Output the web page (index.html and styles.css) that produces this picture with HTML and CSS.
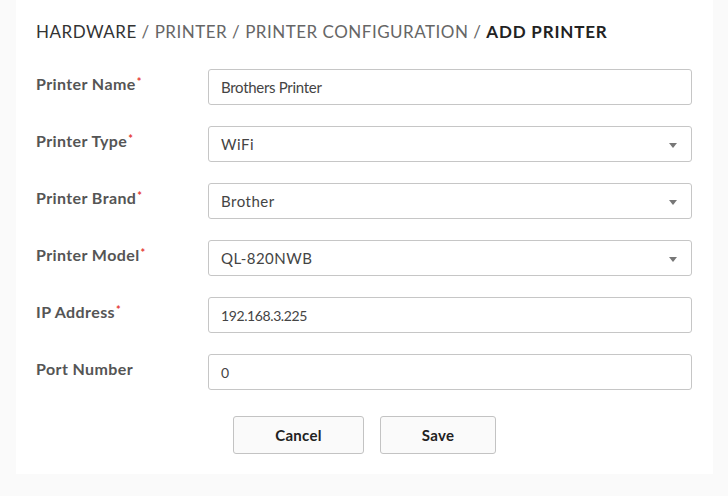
FILE: index.html
```html
<!DOCTYPE html>
<html>
<head>
<meta charset="utf-8">
<link rel="stylesheet" href="styles.css">
</head>
<body>
<div class="page">
  <div class="card">
    <div class="crumbs"><span class="crumb-root">HARDWARE</span><span class="crumb-mid"> / PRINTER / PRINTER CONFIGURATION / </span><span class="crumb-cur">ADD PRINTER</span></div>
    <form class="form">
      <div class="row">
        <label class="label">Printer Name<span class="req">*</span></label>
        <div class="field"><span class="value text">Brothers Printer</span></div>
      </div>
      <div class="row">
        <label class="label">Printer Type<span class="req">*</span></label>
        <div class="field select"><span class="value">WiFi</span><span class="caret"></span></div>
      </div>
      <div class="row">
        <label class="label">Printer Brand<span class="req">*</span></label>
        <div class="field select"><span class="value">Brother</span><span class="caret"></span></div>
      </div>
      <div class="row">
        <label class="label">Printer Model<span class="req">*</span></label>
        <div class="field select"><span class="value">QL-820NWB</span><span class="caret"></span></div>
      </div>
      <div class="row">
        <label class="label">IP Address<span class="req">*</span></label>
        <div class="field"><span class="value light">192.168.3.225</span></div>
      </div>
      <div class="row">
        <label class="label">Port Number</label>
        <div class="field"><span class="value light">0</span></div>
      </div>
      <div class="actions">
        <button type="button" class="btn btn-cancel">Cancel</button>
        <button type="button" class="btn btn-save">Save</button>
      </div>
    </form>
  </div>
</div>
</body>
</html>
```
FILE: styles.css
```css
html, body {
  margin: 0;
  padding: 0;
  background: #fafafa;
  font-family: "Lato", "Open Sans", sans-serif;
}
.page {
  width: 728px;
  height: 496px;
  padding: 0 15px 0 16px;
  box-sizing: border-box;
}
.card {
  background: #ffffff;
  height: 474px;
  box-sizing: border-box;
  padding: 21px 21px 0 20px;
}
.crumbs {
  font-size: 17px;
  line-height: 22px;
  letter-spacing: 0.5px;
  color: #666666;
  white-space: nowrap;
}
.crumb-root { color: #333333; }
.crumb-cur { color: #222222; font-weight: 700; letter-spacing: 0.8px; }
.form {
  margin-top: 26px;
  display: flex;
  flex-direction: column;
  gap: 21px;
}
.row {
  display: flex;
  align-items: flex-start;
}
.label {
  width: 172px;
  flex: none;
  font-size: 16px;
  font-weight: 700;
  color: #555555;
  line-height: 18px;
  padding-top: 6px;
  letter-spacing: 0.4px;
}
.req {
  color: #e53935;
  font-size: 11px;
  vertical-align: top;
  position: relative;
  top: -2px;
  margin-left: 1px;
}
.field {
  flex: 1;
  height: 36px;
  box-sizing: border-box;
  border: 1px solid #c6c6c6;
  border-radius: 3px;
  display: flex;
  align-items: center;
  padding: 0 14px 0 12px;
  background: #fff;
}
.value {
  flex: 1;
  font-size: 15px;
  color: #444444;
  letter-spacing: 0.5px;
}
.value.text { font-size: 15px; letter-spacing: -0.3px; }
.value.light { font-size: 14px; letter-spacing: -0.4px; }
.caret {
  width: 0;
  height: 0;
  border-left: 4.5px solid transparent;
  border-right: 4.5px solid transparent;
  border-top: 5px solid #777777;
  margin-top: 2px;
}
.actions {
  display: flex;
  justify-content: center;
  gap: 16px;
  margin-top: 5px;
  padding-left: 1px;
}
.btn {
  height: 38px;
  background: #fafafa;
  border: 1px solid #c3c3c3;
  border-radius: 3px;
  font-family: "Lato", "Open Sans", sans-serif;
  font-size: 15px;
  font-weight: 700;
  color: #222222;
  letter-spacing: 0.3px;
}
.btn-cancel { width: 131px; }
.btn-save { width: 116px; }
```
